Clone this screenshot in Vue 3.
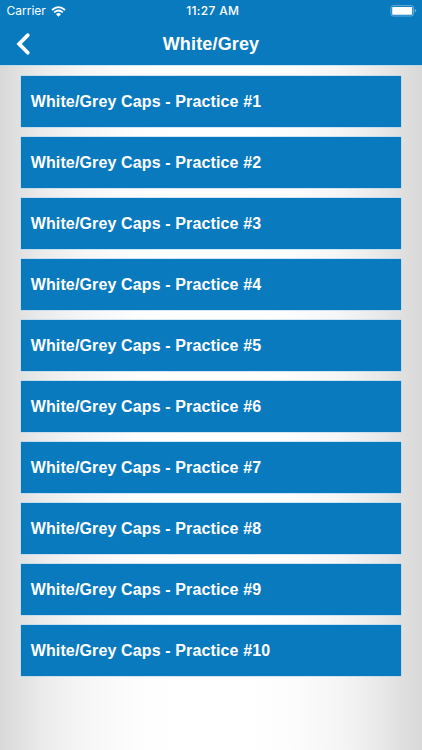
<script setup>
const practices = Array.from({ length: 10 }, (_, i) => `White/Grey Caps - Practice #${i + 1}`)
</script>

<template>
  <div class="screen">
    <header class="header">
      <div class="status">
        <div class="carrier">
          <span>Carrier</span>
          <svg class="wifi" viewBox="0 0 15 11" aria-hidden="true">
            <path d="M1 4Q7.5-1.8 14 4M3.2 6.4Q7.5 2.6 11.8 6.4" fill="none" stroke="#fff" stroke-width="1.8" />
            <path d="M5 8.2Q7.5 6 10 8.2L7.5 10.7Z" fill="#fff" />
          </svg>
        </div>
        <span class="time">11:27 AM</span>
        <svg class="battery" viewBox="0 0 27 12" aria-hidden="true">
          <rect x="0.9" y="0.6" width="22.6" height="10.4" rx="2.3" fill="none" stroke="#73b3e0" stroke-width="0.9" />
          <rect x="2.2" y="1.9" width="20" height="7.8" rx="0.7" fill="#fff" />
          <path d="M24.8 4.1Q26.3 4.5 26.3 5.8T24.8 7.5Z" fill="#73b3e0" />
        </svg>
      </div>
      <div class="nav">
        <button class="back" aria-label="Back">
          <svg viewBox="0 0 16 24" aria-hidden="true">
            <path d="M11.8 3.1L3.1 11.9L11.8 20.7" fill="none" stroke="#fff" stroke-width="3.7" stroke-linecap="round" stroke-linejoin="miter" />
          </svg>
        </button>
        <h1>White/Grey</h1>
      </div>
    </header>
    <main class="list">
      <button v-for="name in practices" :key="name" class="item"><span>{{ name }}</span></button>
    </main>
  </div>
</template>

<style>
body { margin: 0; overflow: hidden; }
</style>

<style scoped>
.screen {
  width: 422px;
  height: 750px;
  display: flex;
  flex-direction: column;
  color: #fff;
  font-family: "Liberation Sans", Arial, sans-serif;
  background: linear-gradient(90deg, #d8d8d8 0, #e0e0e0 4%, #ebebeb 10%, #f5f5f5 19%, #fdfdfd 32%, #fff 42%, #fff 58%, #fdfdfd 68%, #f5f5f5 81%, #e9e9e9 90%, #e0e0e0 95%, #d8d8d8 100%);
}
.header {
  height: 65.3px;
  flex: none;
  background: #0a7abf;
  box-shadow: 0 0.5px 0 #a6d2f1;
}
.status {
  height: 22px;
  padding: 0 5px 0 6.5px;
  display: grid;
  grid-template-columns: 1fr auto 1fr;
  align-items: center;
  font: 12px/22px Inter, sans-serif;
}
.carrier { display: flex; align-items: center; gap: 5px; }
.wifi { width: 15px; height: 11px; }
.time { font-weight: 500; letter-spacing: 0.32px; padding-left: 2px; }
.battery { width: 27px; height: 12px; justify-self: end; }
.nav {
  height: 43px;
  display: grid;
  grid-template-columns: 46px 1fr 46px;
  align-items: center;
}
.back { padding: 0 0 0 16px; border: 0; background: none; display: flex; }
.back svg { width: 16px; height: 24px; }
h1 { margin: 0; text-align: center; font-size: 18px; line-height: 24px; font-weight: 700; letter-spacing: 0.15px; }
.list {
  padding: 10.3px 20.7px 0 20.7px;
  display: flex;
  flex-direction: column;
  gap: 10.1px;
}
.item {
  height: 51px;
  padding: 1px 10px 0;
  border: 0;
  background: #0a7abf;
  box-shadow: 0 0 0 0.5px #a6d2f1;
  color: #fff;
  text-align: left;
  font: bold 16px/20px "Liberation Sans", Arial, sans-serif;
  letter-spacing: 0.13px;
}
</style>
